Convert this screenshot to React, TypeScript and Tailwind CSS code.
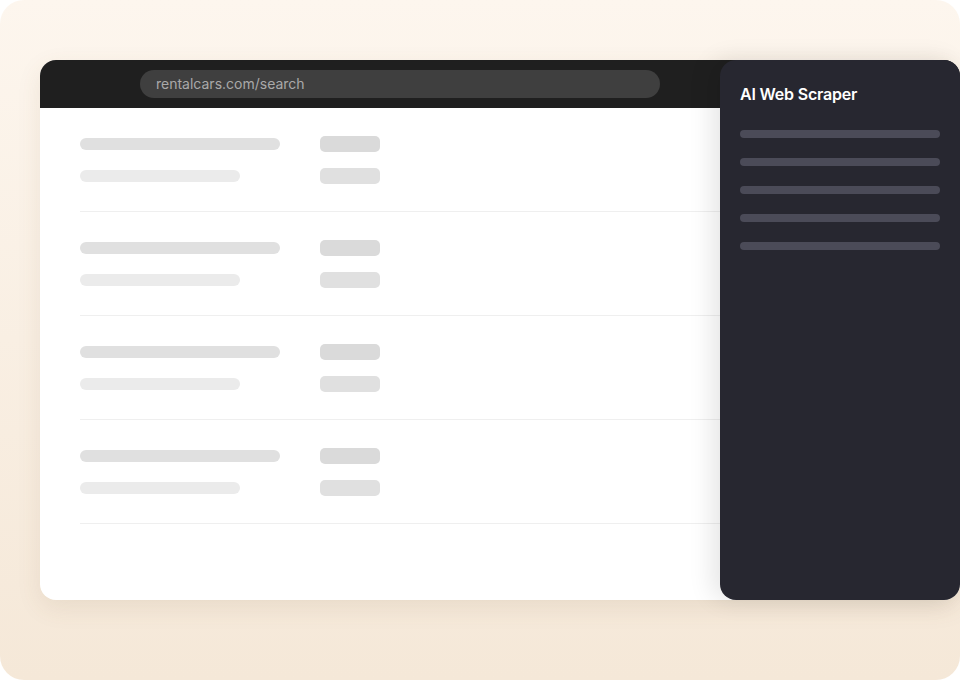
import React from 'react';

const rows = [0, 1, 2, 3];
const panelLines = [0, 1, 2, 3, 4];

const App: React.FC = () => {
  return (
    <div className="w-[960px] h-[680px] bg-white">
      <div
        className="w-[960px] h-[680px] rounded-3xl overflow-hidden bg-gradient-to-b from-[#fdf6ee] to-[#f5e8d8] pt-[60px] pl-[40px]"
        style={{ fontFamily: 'Inter, "Noto Sans", sans-serif' }}
      >
        {/* Browser window */}
        <div className="relative w-[920px] h-[540px] rounded-2xl bg-white shadow-[0_8px_24px_rgba(120,90,50,0.10)]">
          <div className="h-[48px] rounded-t-2xl bg-[#1f1f1f] pl-[100px] pt-[10px]">
            <div className="w-[520px] h-[28px] rounded-full bg-[#3f3f3f] pl-4 pb-[2px] flex items-center text-[14px] text-[#a9a9a9]">
              rentalcars.com/search
            </div>
          </div>

          {/* Skeleton list */}
          <div className="px-[40px]">
            {rows.map((r) => (
              <div key={r} className="pt-[28px] pb-[27px] border-b border-[#efefef] flex flex-col gap-4">
                <div className="flex items-center h-4">
                  <div className="w-[200px] h-3 rounded-full bg-[#e0e0e0]" />
                  <div className="ml-[40px] w-[60px] h-4 rounded-[5px] bg-[#dadada]" />
                </div>
                <div className="flex items-center h-4">
                  <div className="w-[160px] h-3 rounded-full bg-[#ebebeb]" />
                  <div className="ml-[80px] w-[60px] h-4 rounded-[5px] bg-[#e0e0e0]" />
                </div>
              </div>
            ))}
          </div>

          {/* AI side panel */}
          <div className="absolute top-0 right-0 w-[240px] h-[540px] rounded-2xl bg-[#272730] shadow-[-8px_0_24px_rgba(0,0,0,0.10)] px-5 pt-[24px]">
            <div className="text-[16px] font-semibold text-white leading-[20px] tracking-[-0.2px]">AI Web Scraper</div>
            <div className="mt-[26px] flex flex-col gap-5">
              {panelLines.map((l) => (
                <div key={l} className="h-2 w-[200px] rounded-full bg-[#4b4b58]" />
              ))}
            </div>
          </div>
        </div>
      </div>
    </div>
  );
};

export default App;
